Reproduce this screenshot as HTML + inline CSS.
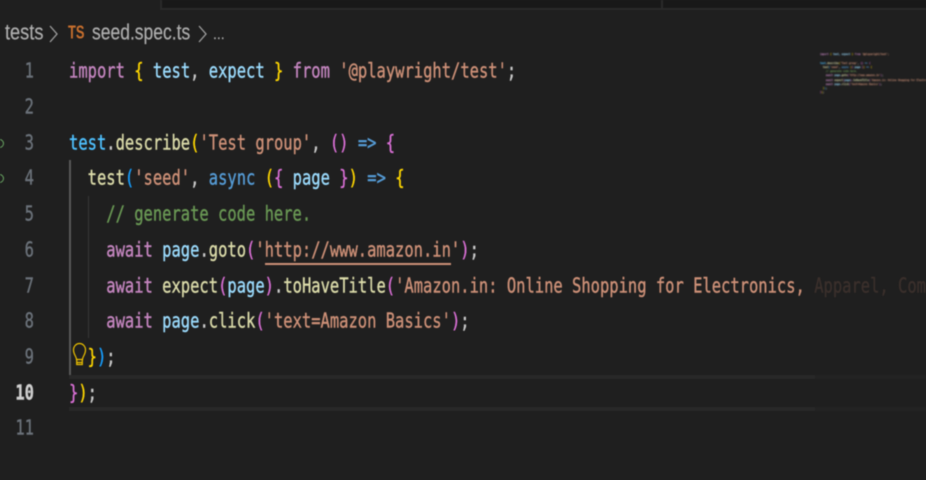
<!DOCTYPE html>
<html><head><meta charset="utf-8">
<style>
html,body{margin:0;padding:0;background:#1f1f1f;width:926px;height:480px;overflow:hidden}
.abs{position:absolute}
#root{position:relative;width:926px;height:480px;overflow:hidden;filter:blur(.4px)}
.l,.n{position:absolute;font-family:"DejaVu Sans Mono","Liberation Mono",monospace;font-size:15.48px;line-height:20px;height:20px;white-space:pre;transform:scaleY(1.34);transform-origin:0 50%;-webkit-text-stroke:.3px currentColor}
.l{left:69px;color:#d4d4d4}
.n{left:0;width:34px;text-align:right;color:#6b727a;transform-origin:100% 50%}
.k{color:#c586c0}.v{color:#9cdcfe}.c{color:#4fc1ff}.f{color:#dcdcaa}.s{color:#ce9178}.b{color:#569cd6}.g{color:#6a9955}
.y{color:#ffd700}.p{color:#da70d6}.u{color:#179fff}.w{color:#cccccc}.fd{color:#3b302c}
.crumb{position:absolute;top:21px;font-family:"Liberation Sans",sans-serif;font-size:20px;line-height:24px;color:#b0b0b0;white-space:pre;transform:scaleX(.89) scaleY(1.12);transform-origin:0 50%;-webkit-text-stroke:.15px currentColor}
#mini{position:absolute;left:820px;top:53px;font-family:"DejaVu Sans Mono",monospace;font-size:2.4px;line-height:4.25px;white-space:pre;filter:blur(.45px);opacity:.8;color:#d4d4d4;-webkit-text-stroke:.15px currentColor}
</style></head>
<body><div id="root">
<div class="abs" style="left:161px;top:0;width:765px;height:8px;background:#181818"></div>
<div class="abs" style="left:160px;top:8px;width:766px;height:2px;background:#2a2a2a"></div>
<div class="abs" style="left:160px;top:0;width:2px;height:9px;background:#2a2a2a"></div>
<div class="abs" style="left:661px;top:0;width:2px;height:9px;background:#2a2a2a"></div>

<div class="crumb" style="left:5px;transform:scaleX(.91) scaleY(1.12)">tests</div>
<svg class="abs" style="left:48px;top:24px" width="12" height="20" viewBox="0 0 12 20"><path d="M2 2L9 10L2 18" fill="none" stroke="#a0a0a0" stroke-width="1.3"/></svg>
<div class="crumb" style="left:68px;top:20px;font-size:14px;font-weight:bold;color:#c9702e;transform:scaleY(1.3) scaleX(.92);-webkit-text-stroke:0">TS</div>
<div class="crumb" style="left:92px;transform:scaleX(.875) scaleY(1.12)">seed.spec.ts</div>
<svg class="abs" style="left:197px;top:24px" width="12" height="20" viewBox="0 0 12 20"><path d="M2 2L9 10L2 18" fill="none" stroke="#a0a0a0" stroke-width="1.3"/></svg>
<div class="crumb" style="left:213px;font-size:14px;top:22px;transform:none">...</div>

<!-- current line highlight -->
<div class="abs" style="left:69px;top:375px;width:746px;height:4px;background:#282828"></div>
<div class="abs" style="left:69px;top:407px;width:746px;height:4px;background:#282828"></div>
<div class="abs" style="left:815px;top:375px;width:111px;height:4px;background:#232323"></div>
<div class="abs" style="left:815px;top:407px;width:111px;height:4px;background:#232323"></div>

<!-- indent guides -->
<div class="abs" style="left:69px;top:160px;width:1.5px;height:215px;background:#585858"></div>
<div class="abs" style="left:87.5px;top:196px;width:1.5px;height:142px;background:#383838"></div>

<!-- gutter run icons -->
<div class="abs" style="left:-5px;top:139px;width:7px;height:7px;border:1.5px solid #6aa864;border-radius:50%"></div>
<div class="abs" style="left:-5px;top:174px;width:7px;height:7px;border:1.5px solid #6aa864;border-radius:50%"></div>

<!-- line numbers -->
<div class="n" style="top:61px">1</div>
<div class="n" style="top:97px">2</div>
<div class="n" style="top:132.5px">3</div>
<div class="n" style="top:168px">4</div>
<div class="n" style="top:204px">5</div>
<div class="n" style="top:240px">6</div>
<div class="n" style="top:275.5px">7</div>
<div class="n" style="top:311px">8</div>
<div class="n" style="top:347px">9</div>
<div class="n" style="top:382.5px;color:#cfcfcf;font-weight:bold">10</div>
<div class="n" style="top:418px">11</div>

<!-- code -->
<div class="l" style="top:61px"><span class="k">import</span> <span class="y">{</span> <span class="v">test</span><span class="w">,</span> <span class="v">expect</span> <span class="y">}</span> <span class="k">from</span> <span class="s">'@playwright/test'</span><span class="w">;</span></div>
<div class="l" style="top:132.5px"><span class="c">test</span><span class="w">.</span><span class="f">describe</span><span class="y">(</span><span class="s">'Test group'</span><span class="w">,</span> <span class="p">()</span> <span class="b">=&gt;</span> <span class="p">{</span></div>
<div class="l" style="top:168px">  <span class="f">test</span><span class="u">(</span><span class="s">'seed'</span><span class="w">,</span> <span class="b">async</span> <span class="y">(</span><span class="p">{</span> <span class="v">page</span> <span class="p">}</span><span class="y">)</span> <span class="b">=&gt;</span> <span class="y">{</span></div>
<div class="l" style="top:204px">    <span class="g">// generate code here.</span></div>
<div class="l" style="top:240px">    <span class="k">await</span> <span class="v">page</span><span class="w">.</span><span class="f">goto</span><span class="p">(</span><span class="s">'http://www.amazon.in'</span><span class="p">)</span><span class="w">;</span></div>
<div class="l" style="top:275.5px">    <span class="k">await</span> <span class="f">expect</span><span class="p">(</span><span class="v">page</span><span class="p">)</span><span class="w">.</span><span class="f">toHaveTitle</span><span class="p">(</span><span class="s">'Amazon.in: Online Shopping for Electronics,</span><span class="fd"> Apparel, Computers, Books</span></div>
<div class="l" style="top:311px">    <span class="k">await</span> <span class="v">page</span><span class="w">.</span><span class="f">click</span><span class="p">(</span><span class="s">'text=Amazon Basics'</span><span class="p">)</span><span class="w">;</span></div>
<div class="l" style="top:347px">  <span class="y">}</span><span class="u">)</span><span class="w">;</span></div>
<div class="l" style="top:382.5px"><span class="p">}</span><span class="y">)</span><span class="w">;</span></div>

<!-- url underline -->
<div class="abs" style="left:265px;top:263px;width:186px;height:1.6px;background:#ce9178"></div>

<!-- bulb -->
<svg class="abs" style="left:72px;top:342px" width="15" height="26" viewBox="0 0 15 26"><path d="M4.5 17.5C4.5 14.5 1.5 12.5 1.5 8A6 6.5 0 0 1 13.5 8C13.5 12.5 10.5 14.5 10.5 17.5ZM4.7 18V22.5H10.3V18M5 20.5H10" fill="none" stroke="#eec200" stroke-width="1.2"/></svg>

<!-- minimap -->
<div id="mini"><span class="k">import</span> <span class="y">{</span> <span class="v">test, expect</span> <span class="y">}</span> <span class="k">from</span> <span class="s">'@playwright/test';</span>

<span class="c">test</span>.<span class="f">describe</span><span class="y">(</span><span class="s">'Test group'</span>, <span class="p">()</span> <span class="b">=&gt;</span> <span class="p">{</span>
  <span class="f">test</span><span class="u">(</span><span class="s">'seed'</span>, <span class="b">async</span> <span class="y">(</span><span class="p">{</span> <span class="v">page</span> <span class="p">}</span><span class="y">)</span> <span class="b">=&gt;</span> <span class="y">{</span>
    <span class="g">// generate code here.</span>
    <span class="k">await</span> <span class="v">page</span>.<span class="f">goto</span><span class="p">(</span><span class="s">'http://www.amazon.in'</span><span class="p">)</span>;
    <span class="k">await</span> <span class="f">expect</span><span class="p">(</span><span class="v">page</span><span class="p">)</span>.<span class="f">toHaveTitle</span><span class="p">(</span><span class="s">'Amazon.in: Online Shopping for Electronics, A</span>
    <span class="k">await</span> <span class="v">page</span>.<span class="f">click</span><span class="p">(</span><span class="s">'text=Amazon Basics'</span><span class="p">)</span>;
  <span class="y">}</span><span class="u">)</span>;
<span class="p">}</span><span class="y">)</span>;</div>
</div></body></html>
